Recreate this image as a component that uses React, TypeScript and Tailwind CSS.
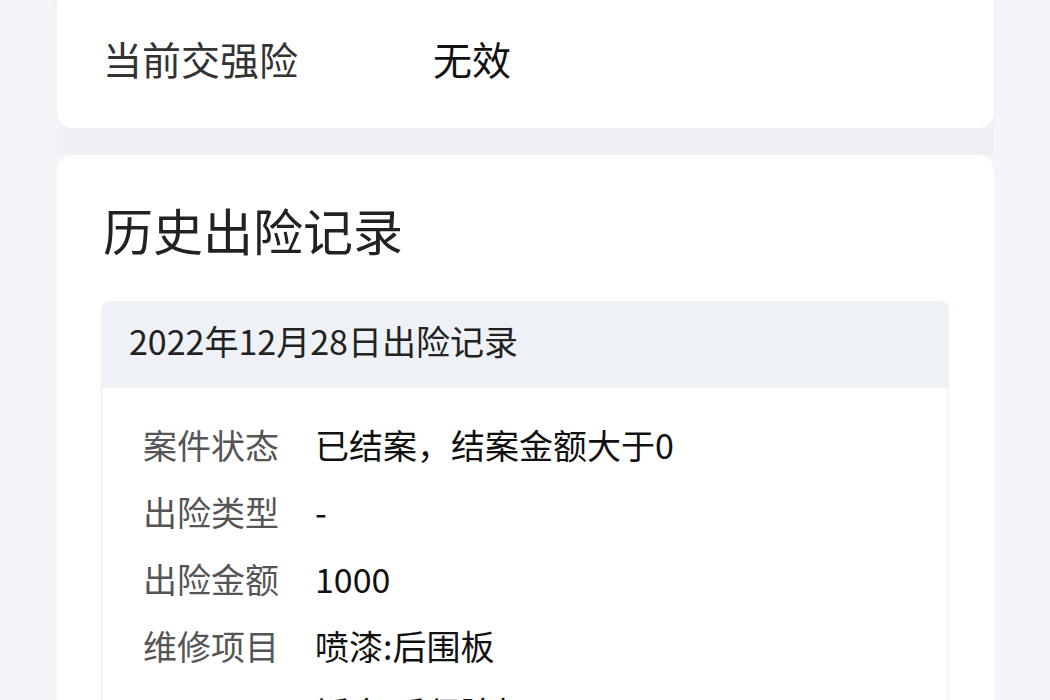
const rows = [
    {label: "案件状态", value: "已结案，结案金额大于0"},
    {label: "出险类型", value: "-"},
    {label: "出险金额", value: "1000"},
    {label: "维修项目", value: "喷漆:后围板"},
    {label: "", value: "钣金:后保险杠"},
]

const App = () => {
    return (
        <div className="min-h-[700px] h-[700px] overflow-hidden bg-[#f4f5f8]"
             style={{fontFamily: '"Noto Sans CJK SC", "Noto Sans", sans-serif'}}>
            <div className="mx-[57px] w-[937px]">

                <div className="h-[128px] bg-white rounded-b-2xl flex items-center px-[46px] pb-[12px] shadow-[0_2px_6px_rgba(0,0,0,0.03)]">
                    <span className="w-[330px] text-[39px] text-[#333]">当前交强险</span>
                    <span className="text-[39px] text-[#111]">无效</span>
                </div>

                <div className="h-[27px] bg-[#eef0f4]"></div>

                <div className="bg-white rounded-t-2xl pt-[38px] pl-[46px] pr-[45px]">
                    <h2 className="text-[50px] leading-[72px] text-[#222]">历史出险记录</h2>

                    <div className="mt-[36px] -ml-[2px] rounded-t-lg border border-[#eef0f3] overflow-hidden">
                        <div className="h-[86px] bg-[#eef1f6] flex items-center px-[27px] pb-[9px]">
                            <span className="text-[34px] text-[#222]">2022年12月28日出险记录</span>
                        </div>

                        <div className="pt-[27px] px-[41px] pb-10">
                            {rows.map((row, i) => (
                                <div key={i} className="flex items-center h-[67px] pb-[8px]">
                                    <span className="w-[172px] text-[34px] text-[#555]">{row.label}</span>
                                    <span className="text-[34px] text-[#111]">{row.value}</span>
                                </div>
                            ))}
                        </div>
                    </div>
                </div>

            </div>
        </div>
    );
};

export default App;
